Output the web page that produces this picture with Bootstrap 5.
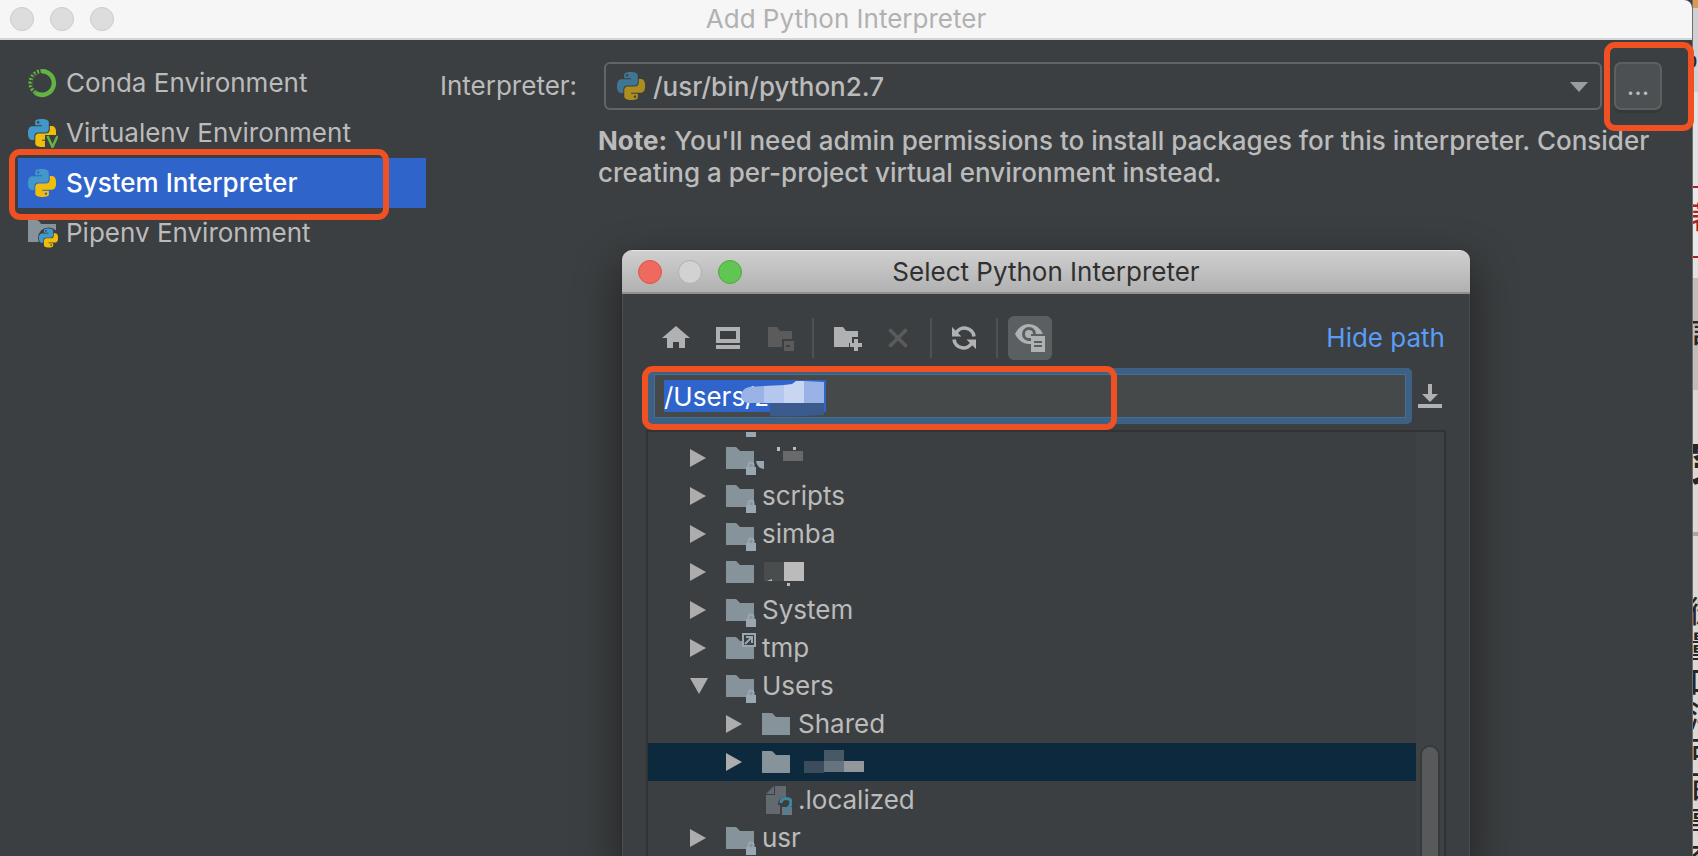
<!DOCTYPE html>
<html lang="en">
<head>
<meta charset="utf-8">
<meta name="viewport" content="width=device-width, initial-scale=1">
<title>Add Python Interpreter</title>
<link href="https://cdn.jsdelivr.net/npm/bootstrap@5.3.0/dist/css/bootstrap.min.css" rel="stylesheet">
<style>
  :root { --panel: #3c3f41; --ink: #bbbbbb; --mark-red: #f05123; }
  body { font-family: Inter, "Liberation Sans", sans-serif; font-size: 26px; line-height: 32px; color: var(--ink); background: var(--panel); }
  svg { display: block; flex: none; }
  .shell { height: 100vh; }
  .win { background: var(--panel); z-index: 1; box-shadow: 1px 0 0 #6d6f71; }
  .win-title { height: 40px; background: #f6f6f6; border-bottom: 2px solid #d3d5d6; color: #b1b1b1; border-top-right-radius: 8px; }
  .lights { left: 10px; gap: 16px; }
  .lights i { width: 24px; height: 24px; border-radius: 50%; background: #dddddd; border: 1px solid #cccccc; }
  .env-list { width: 408px; margin: 18px 0 0 18px; }
  .env { height: 50px; padding-left: 10px; gap: 8px; color: var(--ink); text-decoration: none; }
  .env.active { background: #2f65ca; color: #fff; font-weight: 500; }
  .env svg { width: 30px; height: 30px; }
  .outline-red { border: 6px solid var(--mark-red); border-radius: 11px; pointer-events: none; z-index: 3; }
  .on-item { left: -9px; top: -9px; width: 380px; height: 71px; }
  .on-button { left: -10px; top: -20px; width: 90px; height: 89px; }
  .on-path { left: -6px; top: -2px; width: 475px; height: 64px; }
  .form-area { padding: 22px 30px 0 14px; }
  .form-label-fixed { width: 164px; }
  .combo { height: 48px; width: 100%; appearance: none; background: var(--panel); color: var(--ink); border: 2px solid #646464; border-radius: 6px; padding: 2px 50px 0 47px; font-weight: 500; }
  .combo-icon { left: 13px; top: 10px; opacity: .62; }
  .combo-arrow { right: 14px; top: 20px; }
  .browse-slot { margin-left: 12px; }
  .browse { width: 48px; height: 48px; background: #4c5052; color: var(--ink); border: 2px solid #5e6060; border-radius: 7px; padding: 0; box-shadow: 0 3px 1px #36393b; }
  .note { margin: 15px 0 0 158px; font-weight: 500; }
  .dlg { left: 622px; top: 250px; bottom: 0; width: 848px; background: var(--panel); border-radius: 10px 10px 0 0; box-shadow: 0 18px 44px 4px rgba(0,0,0,.42), 0 0 1px #111; overflow: hidden; z-index: 2; }
  .dlg-title { height: 44px; background: linear-gradient(#cfcfcf, #b1b1b1); border-top: 1px solid #e6e6e6; border-bottom: 2px solid #8f9191; color: #303030; }
  .dlg-title .lights { left: 16px; }
  .lights .red { background: #ee6a5f; border-color: #d9544a; }
  .lights .gray { background: #d2d2d2; border-color: #b0b0b0; }
  .lights .green { background: #61c554; border-color: #4fa83f; }
  .dlg-body { padding: 22px 24px 0; border: solid #4b4f51; border-width: 0 1px; flex: 1; min-height: 0; }
  .tool { width: 44px; height: 44px; padding: 0; border: 0; border-radius: 6px; background: none; display: flex; align-items: center; justify-content: center; color: #afb1b3; }
  .tool.off { color: #5b5b5b; }
  .tool.on { background: #5a5f61; }
  .tools { padding-left: 7px; gap: 8px; }
  .rule { width: 2px; height: 40px; background: #515151; margin: 0 2px; }
  .link-hide { color: #589df6; text-decoration: none; }
  .path-row { margin: 8px -1px 6px 1px; gap: 6px; }
  .path { width: 100%; height: 56px; border: 6px solid #3d6185; border-radius: 5px; box-shadow: inset 0 0 0 1px #466d94; outline: 0; color: #fff; padding: 0 10px;
    background: linear-gradient(#2f65ca, #2f65ca) 10px 6px / 162px 32px no-repeat #45494a; }
  .mosaic { left: 93px; top: 13px; }
  .tree-box { border: 2px solid #323232; border-bottom: 0; margin-right: -1px; margin-left: -1px; flex: 1; min-height: 0; overflow: hidden; }
  .tree { margin: -31px 0 0; flex: 1; }
  .node { height: 38px; padding-left: 42px; }
  .node.deep { padding-left: 78px; }
  .node.sel { background: #0d293e; }
  .node .tw { width: 36px; color: #adadad; }
  .node .fi { width: 30px; height: 30px; margin-right: 6px; }
  .track { width: 28px; background: #3f4244; padding: 313px 4px 0; }
  .thumb { height: 100%; border: 2px solid #37393b; border-bottom: 0; border-radius: 10px 10px 0 0; background: #58595b; }
  .page-behind { width: 6px; background: #ddd8d3; color: #262626; overflow: hidden; font-family: "Liberation Sans", "Noto Sans CJK SC", sans-serif; font-size: 30px; font-weight: 500; white-space: nowrap; }
  .page-behind > div { flex: none; overflow: hidden; display: flex; flex-direction: column; }
  .page-behind span { display: block; width: 30px; margin-left: -3px; flex: none; }
  .pb-tab { height: 8px; background: #d79b55; }
  .pb-bar { height: 84px; background: #d0d0d4; padding-top: 36px; font-size: 24px; }
  .page-behind .pb-bar span { margin-left: -8px; }
  .pb-mid { height: 96px; background: #e2e2e2; border-bottom: 2px solid #b02222; }
  .pb-red { height: 70px; background: #e9e9e9; color: #b02222; border-bottom: 2px solid #b02222; padding-top: 14px; }
  .pb-gap { height: 20px; background: #e2e2e2; }
  .pb-gray { height: 112px; background: #c2bdb9; padding-top: 38px; }
  .pb-head { height: 142px; font-size: 48px; font-weight: 700; padding-top: 58px; }
  .pb-line { height: 4px; background: #aaa5a0; }
  .pb-text { padding-top: 60px; }
  .pb-text span { height: 35px; }
</style>
</head>
<body class="overflow-hidden">
<svg width="0" height="0" class="position-absolute" aria-hidden="true">
  <symbol id="py" viewBox="0 0 24 24">
    <path fill="#4298c8" d="M14.25.18l.9.2.73.26.59.3.45.32.34.34.25.34.16.33.1.3.04.26.02.2-.01.13V8.5l-.05.63-.13.55-.21.46-.26.38-.3.31-.33.25-.35.19-.35.14-.33.1-.3.07-.26.04-.21.02H8.77l-.69.05-.59.14-.5.22-.41.27-.33.32-.27.35-.2.36-.15.37-.1.35-.07.32-.04.27-.02.21v3.06H3.17l-.21-.03-.28-.07-.32-.12-.35-.18-.36-.26-.36-.36-.35-.46-.32-.59-.28-.73-.21-.88-.14-1.05-.05-1.23.06-1.22.16-1.04.24-.87.32-.71.36-.57.4-.44.42-.33.42-.24.4-.16.36-.1.32-.05.24-.01h.16l.06.01h8.16v-.83H6.18l-.01-2.75-.02-.37.05-.34.11-.31.17-.28.25-.26.31-.23.38-.2.44-.18.51-.15.58-.12.64-.1.71-.06.77-.04.84-.02 1.27.05zm-6.3 1.98l-.23.33-.08.41.08.41.23.34.33.22.41.09.41-.09.33-.22.23-.34.08-.41-.08-.41-.23-.33-.33-.22-.41-.09-.41.09z"/>
    <path fill="#f0bd0c" d="M21.1 6.11l.28.06.32.12.35.18.36.27.36.35.35.47.32.59.28.73.21.88.14 1.04.05 1.23-.06 1.23-.16 1.04-.24.86-.32.71-.36.57-.4.45-.42.33-.42.24-.4.16-.36.09-.32.05-.24.02-.16-.01h-8.22v.82h5.84l.01 2.76.02.36-.05.34-.11.31-.17.29-.25.25-.31.24-.38.2-.44.17-.51.15-.58.13-.64.09-.71.07-.77.04-.84.01-1.27-.04-1.07-.14-.9-.2-.73-.25-.59-.3-.45-.33-.34-.34-.25-.34-.16-.33-.1-.3-.04-.25-.02-.2.01-.13v-5.34l.05-.64.13-.54.21-.46.26-.38.3-.32.33-.24.35-.2.35-.14.33-.1.3-.06.26-.04.21-.02.13-.01h5.84l.69-.05.59-.14.5-.21.41-.28.33-.32.27-.35.2-.36.15-.36.1-.35.07-.32.04-.28.02-.21V6.07h2.09l.14.01zm-6.47 14.25l-.23.33-.08.41.08.41.23.33.33.23.41.08.41-.08.33-.23.23-.33.08-.41-.08-.41-.23-.33-.33-.23-.41-.08-.41.08z"/>
  </symbol>
  <symbol id="folder" viewBox="0 0 30 30"><path fill="#87939a" d="M0 4h9q2 0 3 2l2 2h14v18H0z"/></symbol>
  <symbol id="folder-lock" viewBox="0 0 30 32" overflow="visible">
    <path fill="#87939a" d="M0 4h9q2 0 3 2l2 2h14v18H0z"/>
    <path fill="none" stroke="#9aa7b0" stroke-width="2" d="M22.500 25v-3a2.500 2.500 0 0 1 5 0v3"/><path fill="#9aa7b0" d="M20 24h10v8H20z"/>
  </symbol>
  <symbol id="right" viewBox="0 0 16 18"><path fill="currentColor" d="M0 0l16 9-16 9z"/></symbol>
  <symbol id="down" viewBox="0 0 18 16"><path fill="currentColor" d="M0 0h18L9 16z"/></symbol>
</svg>

<div class="shell d-flex">
  <main class="win flex-grow-1 position-relative d-flex flex-column">
    <header class="win-title position-relative d-flex align-items-center justify-content-center flex-shrink-0">
      <div class="lights position-absolute d-flex"><i></i><i></i><i></i></div>
      Add Python Interpreter
    </header>

    <div class="d-flex">
      <nav class="env-list flex-shrink-0" aria-label="Environment type">
        <a class="env d-flex align-items-center" href="#">
          <svg viewBox="0 0 30 30"><path fill="none" stroke="#62b543" stroke-width="4.500" d="M14 3.200a11.800 11.800 0 1 1-6.500 21.600"/><path fill="none" stroke="#62b543" stroke-width="4" stroke-dasharray="2 1.500" d="M7.500 24.500A11.800 11.800 0 0 1 14 3"/><path fill="none" stroke="#3c3f41" stroke-width="1" stroke-dasharray="2.500 2" d="M7 22.500A11.300 11.300 0 0 1 12 3.500"/></svg>
          Conda Environment</a>
        <a class="env d-flex align-items-center" href="#">
          <svg viewBox="0 0 30 30"><use href="#py" width="28" height="28" y="1"/><path fill="#3c3f41" d="M17 17h13v13H17z"/><path fill="none" stroke="#62b543" stroke-width="2.500" d="M19.500 18l5 11 5-11"/></svg>
          Virtualenv Environment</a>
        <a class="env active position-relative d-flex align-items-center" href="#" aria-current="true">
          <svg viewBox="0 0 30 30"><use href="#py" width="28" height="28" y="1"/></svg>
          System Interpreter
          <span class="outline-red on-item position-absolute"></span></a>
        <a class="env d-flex align-items-center" href="#">
          <svg viewBox="0 0 30 30"><path fill="#87939a" d="M0 2h8q3 0 5 4h15v18H0z"/><circle cx="20.500" cy="20" r="10.500" fill="#3c3f41"/><use href="#py" x="11" y="10" width="19" height="20"/></svg>
          Pipenv Environment</a>
      </nav>

      <section class="form-area flex-grow-1">
        <div class="d-flex align-items-center">
          <label class="form-label-fixed flex-shrink-0" for="interp">Interpreter:</label>
          <div class="position-relative flex-grow-1">
            <select id="interp" class="combo"><option>/usr/bin/python2.7</option></select>
            <svg class="combo-icon position-absolute" width="28" height="28"><use href="#py"/></svg>
            <svg class="combo-arrow position-absolute" width="18" height="10" viewBox="0 0 18 10"><path fill="#9a9da0" d="M0 0h18l-9 10z"/></svg>
          </div>
          <div class="browse-slot position-relative">
            <button type="button" class="browse" aria-label="Browse">...</button>
            <span class="outline-red on-button position-absolute"></span>
          </div>
        </div>
        <p class="note"><b>Note:</b> You'll need admin permissions to install packages for this interpreter. Consider creating a per-project virtual environment instead.</p>
      </section>
    </div>

    <section class="dlg position-absolute d-flex flex-column" role="dialog" aria-label="Select Python Interpreter">
      <header class="dlg-title position-relative d-flex align-items-center justify-content-center flex-shrink-0">
        <div class="lights position-absolute d-flex"><i class="red"></i><i class="gray"></i><i class="green"></i></div>
        Select Python Interpreter
      </header>
      <div class="dlg-body d-flex flex-column">
        <div class="d-flex align-items-center justify-content-between">
          <div class="tools d-flex align-items-center">
            <button class="tool" type="button" aria-label="Home"><svg width="28" height="24" viewBox="0 0 28 24"><path fill="currentColor" d="M14 0l14 12h-5v10h-6v-6h-6v6H5V12H0z"/></svg></button>
            <button class="tool" type="button" aria-label="Desktop"><svg width="24" height="24" viewBox="0 0 24 24"><path fill="currentColor" fill-rule="evenodd" d="M0 1h24v16H0zM4 5v8h16V5zM0 19h24v4H0z"/></svg></button>
            <button class="tool off" type="button" aria-label="Project folder"><svg width="28" height="26" viewBox="0 0 28 26"><path fill="currentColor" fill-rule="evenodd" d="M2 2h9l3 4h12v8H16v8H2zM18 16h10v10H18zm2 4v2h4v-2z"/></svg></button>
            <span class="rule"></span>
            <button class="tool" type="button" aria-label="New folder"><svg width="32" height="26" viewBox="0 0 32 26"><path fill="currentColor" d="M4 2h9l3 4h12v6h-6v6h-3v4H4z"/><path fill="currentColor" d="M24 14h4v4h4v4h-4v4h-4v-4h-4v-4h4z"/></svg></button>
            <button class="tool off" type="button" aria-label="Delete"><svg width="20" height="20" viewBox="0 0 20 20"><path fill="none" stroke="currentColor" stroke-width="3.500" d="M1.500 1.500l17 17m0-17l-17 17"/></svg></button>
            <span class="rule"></span>
            <button class="tool" type="button" aria-label="Refresh"><svg width="24" height="24" viewBox="0 0 24 24"><path fill="none" stroke="currentColor" stroke-width="3.600" d="M4 7.500A9.500 9.500 0 0 1 22 10.500M2 13.500a9.500 9.500 0 0 0 18 3"/><path fill="currentColor" d="M0 1v9.500h9.500zM24 23v-9.500h-9.500z"/></svg></button>
            <span class="rule"></span>
            <button class="tool on" type="button" aria-label="Show hidden files"><svg width="30" height="28" viewBox="0 0 30 28"><path fill="currentColor" fill-rule="evenodd" d="M0 10Q5 0 14 0t14 10H16v10h-2Q5 20 0 10zM14 3a7 7 0 0 0 0 14h2v-3h-2a4 4 0 1 1 4-4h3a7 7 0 0 0-7-7z"/><path fill="currentColor" d="M16 12h14v16H16z"/><path stroke="#5a5f61" stroke-width="2" d="M19 18h8m-8 4h8"/></svg></button>
          </div>
          <a class="link-hide" href="#">Hide path</a>
        </div>

        <div class="path-row position-relative d-flex align-items-center">
          <input class="path" type="text" value="/Users/z" aria-label="Path">
          <svg class="mosaic position-absolute" width="86" height="36" viewBox="0 0 86 36"><path fill="#99b3e6" d="M0 14q1-6 8-8l16-1v17H6q-6-2-6-8z"/><path fill="#b4c7ef" d="M23 5l20-1v18H23z"/><path fill="#c8d6f2" d="M43 4l8-1 4-3h8v22H43z"/><path fill="#99b3e6" d="M63 0l20 1v21H63z"/><path fill="#3b5a8e" d="M29 22h54v12q-30 2-54 1z"/></svg>
          <button class="border-0 bg-transparent p-0" type="button" aria-label="History"><svg width="28" height="24" viewBox="0 0 28 24"><path fill="#afb1b3" d="M10 0h4v10h6l-8 8-8-8h6zM0 20h24v4H0z"/></svg></button>
          <span class="outline-red on-path position-absolute"></span>
        </div>

        <div class="tree-box d-flex">
          <ul class="tree list-unstyled" role="tree">
            <li class="node d-flex align-items-center"><span class="tw"></span><svg class="fi overflow-visible" viewBox="0 0 30 30"><path fill="#9aa7b0" d="M20 24h10v8H20z"/></svg></li>
            <li class="node d-flex align-items-center"><span class="tw"><svg width="16" height="18"><use href="#right"/></svg></span><svg class="fi overflow-visible"><use href="#folder-lock" width="30" height="32"/></svg>
              <svg class="overflow-visible" width="50" height="30"><path fill="#9aa7b0" d="M-6 18h8v8q-7-1-8-8z"/><path fill="#bbb" d="M15 4h3v4h-3zM31 4h3v3h-3z"/><path fill="#696a6b" d="M21 8h20v10H21z"/></svg></li>
            <li class="node d-flex align-items-center"><span class="tw"><svg width="16" height="18"><use href="#right"/></svg></span><svg class="fi overflow-visible"><use href="#folder-lock" width="30" height="32"/></svg>scripts</li>
            <li class="node d-flex align-items-center"><span class="tw"><svg width="16" height="18"><use href="#right"/></svg></span><svg class="fi overflow-visible"><use href="#folder-lock" width="30" height="32"/></svg>simba</li>
            <li class="node d-flex align-items-center"><span class="tw"><svg width="16" height="18"><use href="#right"/></svg></span><svg class="fi"><use href="#folder"/></svg>
              <svg width="50" height="30"><path fill="#4a4d4e" d="M2 5h20v19H2z"/><path fill="#bbb" d="M22 5h20v19H22zM25 26h3v3h-3zM5 24l5-2v2z"/></svg></li>
            <li class="node d-flex align-items-center"><span class="tw"><svg width="16" height="18"><use href="#right"/></svg></span><svg class="fi overflow-visible"><use href="#folder-lock" width="30" height="32"/></svg>System</li>
            <li class="node d-flex align-items-center"><span class="tw"><svg width="16" height="18"><use href="#right"/></svg></span><svg class="fi" viewBox="0 0 30 30"><use href="#folder"/><path fill="#3c3f41" stroke="#9aa7b0" stroke-width="2" d="M17 1h12v12H17z"/><path fill="none" stroke="#9aa7b0" stroke-width="2" d="M19 11l7-7m-6 0h6v6"/></svg>tmp</li>
            <li class="node d-flex align-items-center"><span class="tw"><svg width="18" height="16"><use href="#down"/></svg></span><svg class="fi overflow-visible"><use href="#folder-lock" width="30" height="32"/></svg>Users</li>
            <li class="node deep d-flex align-items-center"><span class="tw"><svg width="16" height="18"><use href="#right"/></svg></span><svg class="fi"><use href="#folder"/></svg>Shared</li>
            <li class="node deep sel d-flex align-items-center"><span class="tw"><svg width="16" height="18"><use href="#right"/></svg></span><svg class="fi"><use href="#folder"/></svg>
              <svg width="70" height="30"><path fill="#3b4c5d" d="M6 14h20v12H6z"/><path fill="#485966" d="M26 3h20v11H26z"/><path fill="#667480" d="M26 14h20v11H26z"/><path fill="#93979c" d="M46 14h20v11H46z"/></svg></li>
            <li class="node deep d-flex align-items-center"><span class="tw"></span><svg class="fi" viewBox="0 0 30 30"><path fill="#626a70" d="M4 10h9V1h11v11q-8 0-8 8h2v9H4zM4 9l8-8v8z"/><path fill="#6b777e" d="M20 22h10v8H20z"/><path fill="none" stroke="#3f87a1" stroke-width="3.200" d="M19 18q0-4.500 5-4.500t5 4-5 7v1.500M24 28v2"/></svg>.localized</li>
            <li class="node d-flex align-items-center"><span class="tw"><svg width="16" height="18"><use href="#right"/></svg></span><svg class="fi overflow-visible"><use href="#folder-lock" width="30" height="32"/></svg>usr</li>
          </ul>
          <div class="track"><div class="thumb"></div></div>
        </div>
      </div>
    </section>
  </main>

  <aside class="page-behind flex-shrink-0" aria-hidden="true">
    <div class="pb-tab"></div>
    <div class="pb-bar"><span>o</span></div>
    <div class="pb-mid"></div>
    <div class="pb-red"><span>著</span></div>
    <div class="pb-gap"></div>
    <div class="pb-gray"><span>言</span></div>
    <div class="pb-head"><span>究</span></div>
    <div class="pb-line"></div>
    <div class="pb-text"><span>微</span><span>量</span><span>口</span><span>沁</span><span>可</span><span>百</span><span>事</span><span>交</span></div>
  </aside>
</div>
<script src="https://cdn.jsdelivr.net/npm/bootstrap@5.3.0/dist/js/bootstrap.bundle.min.js"></script>
</body>
</html>
